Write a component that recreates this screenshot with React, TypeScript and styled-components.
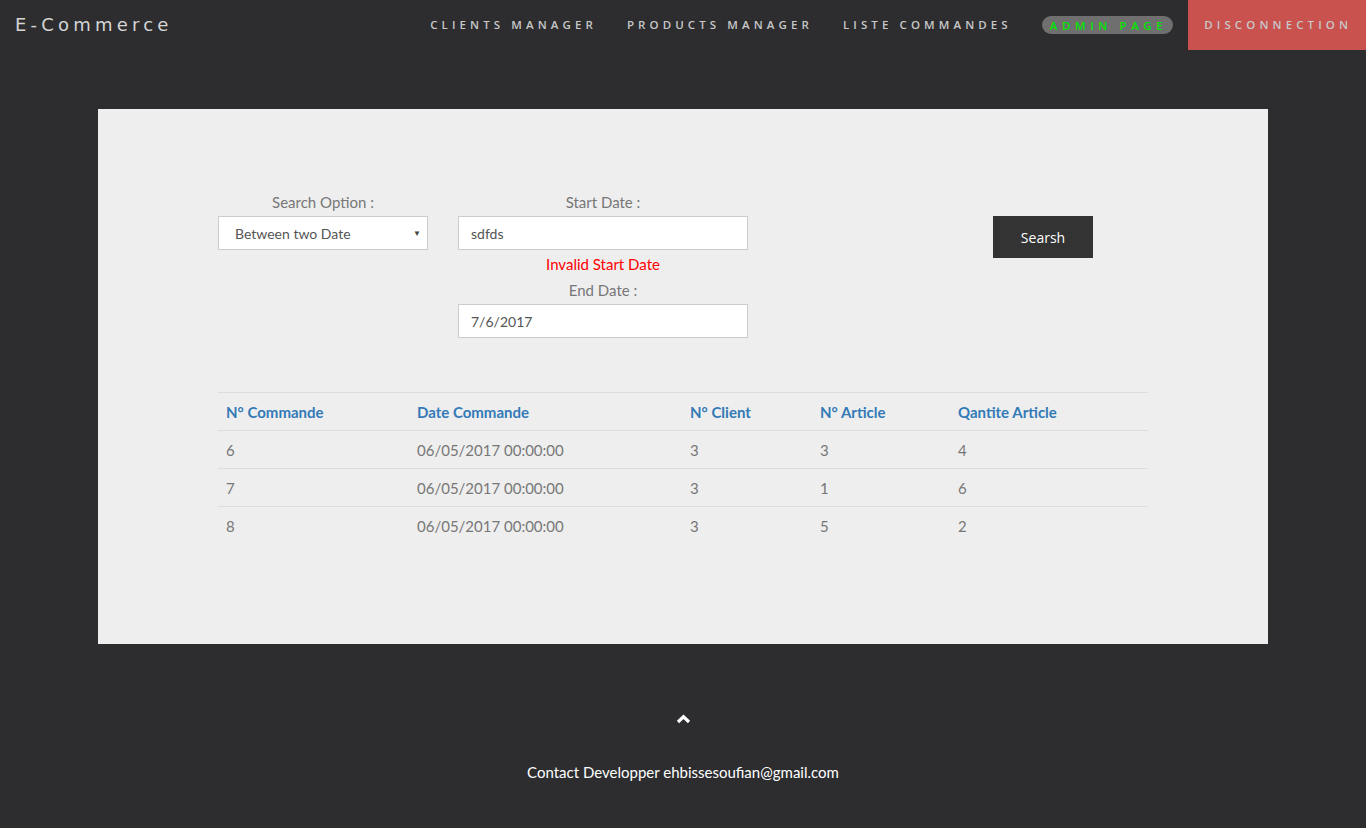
import React from 'react';
import styled, { createGlobalStyle } from 'styled-components';

const GlobalStyle = createGlobalStyle`
  html, body {
    margin: 0;
    padding: 0;
    background: #2d2d30;
    font-family: Lato, "Open Sans", sans-serif;
  }
  * { box-sizing: border-box; }
`;

const Page = styled.div`
  min-height: 828px;
  background: #2d2d30;
`;

const NavBar = styled.nav`
  height: 50px;
  display: flex;
  align-items: stretch;
  justify-content: space-between;
`;

const Brand = styled.a`
  padding: 0 15px;
  line-height: 50px;
  font-family: "DejaVu Sans", sans-serif;
  font-size: 18px;
  letter-spacing: 4.2px;
  color: #d5d5d5;
`;

const Links = styled.ul`
  display: flex;
  margin: 0;
  padding: 0;
  list-style: none;
`;

const NavLink = styled.li<{ $danger?: boolean }>`
  display: flex;
  align-items: center;
  padding: 0 14px 1px 16px;
  margin-left: ${(p) => (p.$danger ? '1px' : '0')};
  font-family: "Open Sans", sans-serif;
  font-size: 11.5px;
  font-weight: 600;
  letter-spacing: 4.1px;
  color: #c8c8c8;
  background: ${(p) => (p.$danger ? '#c9514e' : 'transparent')};
`;

const AdminPill = styled.span`
  margin-top: 1px;
  height: 18px;
  display: flex;
  align-items: center;
  padding: 0 6px 0 8px;
  border-radius: 10px;
  background: #6f6f6f;
  color: #00e600;
  letter-spacing: 4.6px;
`;

const Card = styled.section`
  margin: 59px 98px 0;
  height: 535px;
  background: #eeeeee;
  padding: 83px 120px 0;
`;

const FormRow = styled.div`
  display: flex;
  align-items: flex-start;
`;

const Field = styled.div<{ $w: number; $ml?: number }>`
  width: ${(p) => p.$w}px;
  margin-left: ${(p) => p.$ml || 0}px;
  display: flex;
  flex-direction: column;
  align-items: stretch;
`;

const Label = styled.label`
  text-align: center;
  font-size: 15px;
  line-height: 21px;
  color: #777;
`;

const SelectBox = styled.div`
  position: relative;
  height: 34px;
  background: #fff;
  border: 1px solid #ccc;
  margin-top: 3px;
  padding-left: 16px;
  display: flex;
  align-items: center;
  font-size: 14px;
  color: #555;
`;

const Arrow = styled.span`
  position: absolute;
  right: 6px;
  top: 11px;
  font-size: 8px;
  color: #444;
`;

const Input = styled.input`
  height: 34px;
  margin-top: 3px;
  border: 1px solid #ccc;
  background: #fff;
  padding: 0 12px;
  font-family: Lato, sans-serif;
  font-size: 14px;
  color: #555;
  outline: none;
`;

const ErrorText = styled.div`
  text-align: center;
  color: #ff0000;
  font-size: 15px;
  line-height: 21px;
  margin-top: 4px;
  margin-bottom: 5px;
`;

const Button = styled.button`
  margin-left: 245px;
  margin-top: 24px;
  width: 100px;
  height: 42px;
  border: none;
  background: #333333;
  color: #fff;
  font-family: "Open Sans", sans-serif;
  font-size: 14px;
`;

const Table = styled.table`
  margin-top: 54px;
  width: 930px;
  border-collapse: collapse;
  font-size: 15px;
`;

const Th = styled.th<{ $w: number }>`
  width: ${(p) => p.$w}px;
  text-align: left;
  padding: 0 8px;
  height: 38px;
  color: #337ab7;
  font-weight: bold;
  border-top: 1px solid #ddd;
  border-bottom: 1px solid #ddd;
`;

const Td = styled.td`
  padding: 0 8px;
  height: 38px;
  color: #777;
  border-bottom: 1px solid #ddd;
`;

const LastRow = styled.tr`
  td { border-bottom: none; }
`;

const Footer = styled.footer`
  display: flex;
  flex-direction: column;
  align-items: center;
  padding-top: 70px;
`;

const UpLink = styled.a`
  display: block;
  line-height: 0;
`;

const Contact = styled.p`
  margin: 39px 0 0;
  color: #fff;
  font-size: 15px;
`;

const headers: [string, number][] = [
  ['N° Commande', 191],
  ['Date Commande', 273],
  ['N° Client', 130],
  ['N° Article', 138],
  ['Qantite Article', 198],
];

const rows = [
  ['6', '06/05/2017 00:00:00', '3', '3', '4'],
  ['7', '06/05/2017 00:00:00', '3', '1', '6'],
  ['8', '06/05/2017 00:00:00', '3', '5', '2'],
];

export default function App() {
  return (
    <Page>
      <GlobalStyle />
      <NavBar>
        <Brand>E-Commerce</Brand>
        <Links>
          <NavLink>CLIENTS MANAGER</NavLink>
          <NavLink>PRODUCTS MANAGER</NavLink>
          <NavLink>LISTE COMMANDES</NavLink>
          <NavLink>
            <AdminPill>ADMIN PAGE</AdminPill>
          </NavLink>
          <NavLink $danger>DISCONNECTION</NavLink>
        </Links>
      </NavBar>

      <Card>
        <FormRow>
          <Field $w={210}>
            <Label>Search Option :</Label>
            <SelectBox>
              Between two Date
              <Arrow>▼</Arrow>
            </SelectBox>
          </Field>
          <Field $w={290} $ml={30}>
            <Label>Start Date :</Label>
            <Input defaultValue="sdfds" />
            <ErrorText>Invalid Start Date</ErrorText>
            <Label>End Date :</Label>
            <Input defaultValue="7/6/2017" />
          </Field>
          <Button>Searsh</Button>
        </FormRow>

        <Table>
          <thead>
            <tr>
              {headers.map(([h, w]) => (
                <Th key={h} $w={w}>
                  {h}
                </Th>
              ))}
            </tr>
          </thead>
          <tbody>
            {rows.map((r, i) =>
              i === rows.length - 1 ? (
                <LastRow key={i}>
                  {r.map((c, j) => (
                    <Td key={j}>{c}</Td>
                  ))}
                </LastRow>
              ) : (
                <tr key={i}>
                  {r.map((c, j) => (
                    <Td key={j}>{c}</Td>
                  ))}
                </tr>
              )
            )}
          </tbody>
        </Table>
      </Card>

      <Footer>
        <UpLink>
          <svg width="15" height="10" viewBox="0 0 15 10">
            <polyline
              points="2,8 7.5,2.8 13,8"
              fill="none"
              stroke="#fff"
              strokeWidth="3.2"
              strokeLinejoin="miter"
            />
          </svg>
        </UpLink>
        <Contact>Contact Developper ehbissesoufian@gmail.com</Contact>
      </Footer>
    </Page>
  );
}
